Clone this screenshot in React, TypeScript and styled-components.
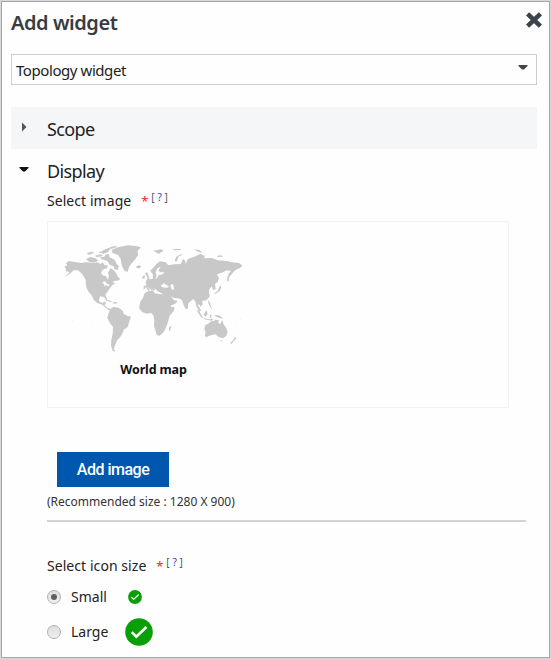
import React, { useState } from "react";
import styled, { createGlobalStyle } from "styled-components";

const GlobalStyle = createGlobalStyle`
  *, *::before, *::after { box-sizing: border-box; }
  body { margin: 0; background: #fff; font-family: "Noto Sans", "Open Sans", sans-serif; color: #222; }
`;

const Dialog = styled.main`
  width: 551px;
  height: 659px;
  border: 1px solid #d8d8d8;
  background: #fefefe;
  overflow: hidden;
`;

const DialogBody = styled.div`
  height: 657px;
  border: 1px solid #a6a6a6;
  padding: 0 12px 0 9px;
`;

const TitleBar = styled.header`
  display: flex;
  justify-content: space-between;
  height: 52px;
  margin-right: -5px;
`;

const Title = styled.h1`
  margin: 7px 0 0;
  font-size: 20px;
  line-height: 28px;
  font-weight: 600;
  letter-spacing: -0.45px;
  color: #373c43;
`;

const CloseButton = styled.button`
  width: 16px;
  height: 16px;
  margin-top: 10px;
  padding: 0;
  border: 0;
  background: none;
  svg { display: block; }
`;

const SelectField = styled.div`
  display: flex;
  justify-content: space-between;
  height: 31px;
  padding: 0 8px 0 4px;
  border: 1px solid #cdcdcd;
  font-size: 15px;
  line-height: 31px;
  letter-spacing: -0.43px;
  svg { margin-top: 9px; }
`;

const SectionHeader = styled.div<{ $open?: boolean }>`
  display: flex;
  align-items: flex-start;
  height: ${(p) => (p.$open ? 41 : 42)}px;
  margin-top: ${(p) => (p.$open ? 0 : 22)}px;
  padding-left: 8px;
  background: ${(p) => (p.$open ? "transparent" : "#f5f6f8")};
  svg { margin-top: ${(p) => (p.$open ? 17 : 15)}px; }
`;

const SectionTitle = styled.h2`
  margin: 9px 0 0 18px;
  font-size: 18px;
  line-height: 26px;
  font-weight: 400;
  letter-spacing: -0.6px;
`;

const Content = styled.section`
  padding-left: 36px;
`;

const FieldLabel = styled.div`
  display: flex;
  align-items: center;
  height: 20px;
  font-size: 14px;
  letter-spacing: 0.06px;
`;

const Required = styled.span`
  margin: 2px 0 0 10px;
  width: 7px;
  font-size: 13px;
  line-height: 20px;
  color: #f22;
`;

const Help = styled.span`
  margin: -7px 0 0 3px;
  font-size: 10px;
  letter-spacing: 2.8px;
  color: #555;
  b { font-weight: 400; color: #3b35d8; }
`;

const Gallery = styled.div`
  width: 462px;
  height: 187px;
  margin-top: 11px;
  padding: 13px 0 0 2px;
  border: 1px solid #f3f3f3;
`;

const Figure = styled.figure`
  width: 207px;
  margin: 0;
  svg { display: block; }
`;

const Caption = styled.figcaption`
  margin-top: 1px;
  font-size: 12.5px;
  line-height: 18px;
  font-weight: 700;
  text-align: center;
  letter-spacing: -0.15px;
  color: #111;
`;

const AddButton = styled.button`
  display: block;
  width: 112px;
  height: 35px;
  margin: 44px 0 0 10px;
  padding: 0;
  border: 0;
  background: #0057ae;
  color: #fff;
  font: 500 16px/35px Roboto, sans-serif;
  letter-spacing: -0.5px;
`;

const Hint = styled.p`
  width: 479px;
  height: 35px;
  margin: 0 0 33px;
  padding-top: 6px;
  border-bottom: 2px solid #d3d3d3;
  font-size: 12px;
  line-height: 18px;
  color: #333;
`;

const Option = styled.label`
  display: flex;
  align-items: center;
  height: 35px;
`;

const OptionList = styled.div`
  padding-top: 4px;
`;

const Radio = styled.span<{ $checked: boolean }>`
  display: grid;
  place-items: center;
  width: 14px;
  height: 14px;
  border: 1px solid #b0b0b0;
  border-radius: 50%;
  background: linear-gradient(#dedede, #f0f0f0);
  &::after {
    content: "";
    width: 6px;
    height: 6px;
    border-radius: 50%;
    background: ${(p) => (p.$checked ? "#606060" : "transparent")};
  }
`;

const OptionText = styled.span`
  width: 54px;
  margin-left: 10px;
  font-size: 14px;
`;

const IconSlot = styled.span`
  display: grid;
  justify-items: center;
  min-width: 20px;
`;

const Caret = ({ right, color = "#333" }: { right?: boolean; color?: string }) => (
  <svg width="10" height="10" viewBox="0 0 10 10">
    <path d={right ? "M3 .5 7.5 5 3 9.5Z" : "M.5 1H9.5V2L6 5.5H4L.5 2Z"} fill={color} />
  </svg>
);

const Check = ({ size }: { size: number }) => (
  <svg width={size} height={size} viewBox="0 0 28 28">
    <circle cx="14" cy="14" r="13.8" fill="#089f08" />
    <path d="m6.8 14.2 4.5 4.5L21.4 9" fill="none" stroke="#fff" strokeWidth="2.6" />
  </svg>
);

const WorldMap = () => (
  <svg width="200" height="125" viewBox="0 0 600 375" fill="#c8c8c8">
    {/* North and Central America */}
    <path d="M48 84 57 78 75 81 94 84 109 82 127 84 142 82 151 87 158 82 164 91 174 91 171 100 158 104 153 114 160 122 168 123 173 134 177 124 174 113 181 100 190 104 198 113 204 126 211 132 203 137 193 137 188 142 196 146 187 150 180 159 174 168 166 179 170 190 174 196 170 198 163 187 151 184 147 192 149 201 158 204 164 199 168 203 164 211 173 219 182 222 178 226 168 219 158 210 141 203 131 194 125 181 116 171 111 162 107 146 107 134 96 116 84 106 70 106 63 114 50 122 43 126 59 112 47 108 48 101 43 95 52 91Z" />
    <path fill="#fefefe" d="m156 142 10-3 5 7 8 3-4 5-8-4-2 5-4-9Z" />
    <path d="m108 72 13-6 16 4 8 7-16 6-12-3Zm2-17 14-5 9 3-16 7ZM135 62l18-4 6 5-19 4Zm27-18 23-9 16-3-5 6-16 4-5 9-15 5-15-4 11-3ZM166 59l10-2 3 10 15 7 6 12 7 8-5 12-9-4-2-8-11-4-8-12-17-5-5-6 13-2Z" />
    {/* Greenland and Iceland */}
    <path d="m186 44 17-7 31-6 24 2 15 4-10 10 1 13-9 14-11 12-7 10-4 15-10-4-8-17-3-18-8-12-17-7Zm73 50 8-3 7 3-4 6-10-1Z" />
    {/* Caribbean */}
    <path d="m166 195 12 1 11 5-11-1Zm23 7 9-1 5 4-13 1Z" />
    {/* South America */}
    <path d="m181 221 10-6 16 4 11 8 3 9 10 6 12 3-5 14-5 17-12 8-4 12-8 12-8 8-3 9-4 9-2 10 3 4-7-2-5-14 1-17 4-19 1-20-9-11-8-16 4-15Zm8 123 7 2-2 4-7-3Z" />
    {/* Europe and Asia */}
    <path d="M305 114 301 107 311 97 319 87 330 79 347 82 355 91 373 88 392 87 399 72 406 77 407 88 413 72 431 66 452 56 464 64 463 70 485 69 504 76 530 78 546 82 566 84 577 91 571 99 562 102 553 108 543 120 535 129 535 118 543 108 530 106 515 113 501 118 507 130 503 141 495 147 497 162 490 166 485 154 478 163 476 171 480 184 469 196 456 198 458 208 452 215 447 207 444 211 453 226 449 231 439 213 437 202 430 192 415 205 413 221 407 223 401 210 396 195 384 190 370 188 362 183 372 196 382 197 379 204 357 215 350 204 345 189 338 176 327 171 319 165 314 160 305 158 308 169 299 160 290 152 299 162 296 169 288 156 281 165 281 154 290 150 286 141 296 133 308 132 309 118Z" />
    <path d="m293 140 7 2-4 9-8-5Zm-8-26 7-2 4 12 4 11-12 3 5-9Zm-7 9 7-2-1 9-8 2ZM374 79l4-13 14-8 7 0-14 7-4 14ZM432 43l16 2 10 8-13-2ZM310 47l23-4 8 4-15 9Zm55-5 25 0 5 3-20 1ZM501 62l13-1 6 4-17 1Z" />
    <path fill="#fefefe" d="m317 112 5-12 10-5-7 12 7 5 12 0-7 6-11 3-5 9-5 2 4-10Zm15 41 9-8 8 4 9 7-9 2-11-1Zm30-3 5-4 4 7 1 12-7-2-3-7Z" />
    {/* Mediterranean peninsulas */}
    <path d="m301 149 7 4 8 12-5 2-12-13Zm23 0 7 10-1 8-6-5-4-8Z" />
    {/* Africa and Madagascar */}
    <path d="m284 174 12-6 13-1 5 8 14 2 14 1 6 13 7 14 9 11 10 1-3 12-12 13-4 15-5 15-7 17-14 13-9-2-3-11-5-17 1-17-3-14-7-7-13 2-14-5-9-12 4-19 8-12Zm80 97-3 15-4 2 0-10Z" />
    {/* Japan, Philippines and Indonesia */}
    <path d="m533 122 5 3-3 15-4-3ZM511 149l3 9-6 11-12 8-4-1 11-8Zm-35 47 4 9 6 17-5-5-7-15ZM440 222l8 8 9 14 4 7-6-3-11-15Zm21 27 16 4 15-1-8 5-21-4Zm1-13 7-10 4 9-5 10-7-4Zm17 4 8-2-4 5 3 9-6-5Zm14 0 14 1 13 10-9-1-14-6Z" />
    {/* Australia and New Zealand */}
    <path d="m466 270 9-4 9-8 8 1 3-5 11 1-1 9 7 3 4-12 5 13 7 10 5 12-4 13-10 7-12-3-11-9-14 3-12 5-6-2 3-12-4-10Zm45 46 6 0-3 5Zm43-11 5 5-7 7-8 10-4-2 10-10Z" />
    {/* Small Atlantic and Pacific islands */}
    <path fill="#e4e4e4" d="m58 198 3 1-1 2ZM66 256h2v2h-2Zm57 14h2v2h-2Zm82 69 4 2-3 1Zm33 8h3v1h-3Zm320-82h2v2h-2Zm12-12h2v2h-2Z" />
  </svg>
);

const HelpMark = () => <Help>[<b>?</b>]</Help>;

const options = [
  { name: "Small", iconSize: 14 },
  { name: "Large", iconSize: 28 },
];

export default function App() {
  const [iconSize, setIconSize] = useState("Small");
  return (
    <>
      <GlobalStyle />
      <Dialog>
        <DialogBody>
          <TitleBar>
            <Title>Add widget</Title>
            <CloseButton aria-label="Close">
              <svg width="16" height="16" viewBox="0 0 16 16">
                <path d="m3.2 3.4 9.6 9.2M12.8 3.4 3.2 12.6" stroke="#3d434b" strokeWidth="4.6" strokeLinecap="square" strokeLinejoin="round" />
              </svg>
            </CloseButton>
          </TitleBar>
          <SelectField>Topology widget<Caret color="#444" /></SelectField>
          <SectionHeader><Caret right color="#555" /><SectionTitle>Scope</SectionTitle></SectionHeader>
          <SectionHeader $open><Caret color="#111" /><SectionTitle>Display</SectionTitle></SectionHeader>
          <Content>
            <FieldLabel>Select image<Required>*</Required><HelpMark /></FieldLabel>
            <Gallery>
              <Figure>
                <WorldMap />
                <Caption>World map</Caption>
              </Figure>
            </Gallery>
            <AddButton>Add image</AddButton>
            <Hint>(Recommended size : 1280 X 900)</Hint>
            <FieldLabel>Select icon size<Required>*</Required><HelpMark /></FieldLabel>
            <OptionList>
              {options.map((o) => (
                <Option key={o.name} onClick={() => setIconSize(o.name)}>
                  <Radio $checked={iconSize === o.name} />
                  <OptionText>{o.name}</OptionText>
                  <IconSlot><Check size={o.iconSize} /></IconSlot>
                </Option>
              ))}
            </OptionList>
          </Content>
        </DialogBody>
      </Dialog>
    </>
  );
}
